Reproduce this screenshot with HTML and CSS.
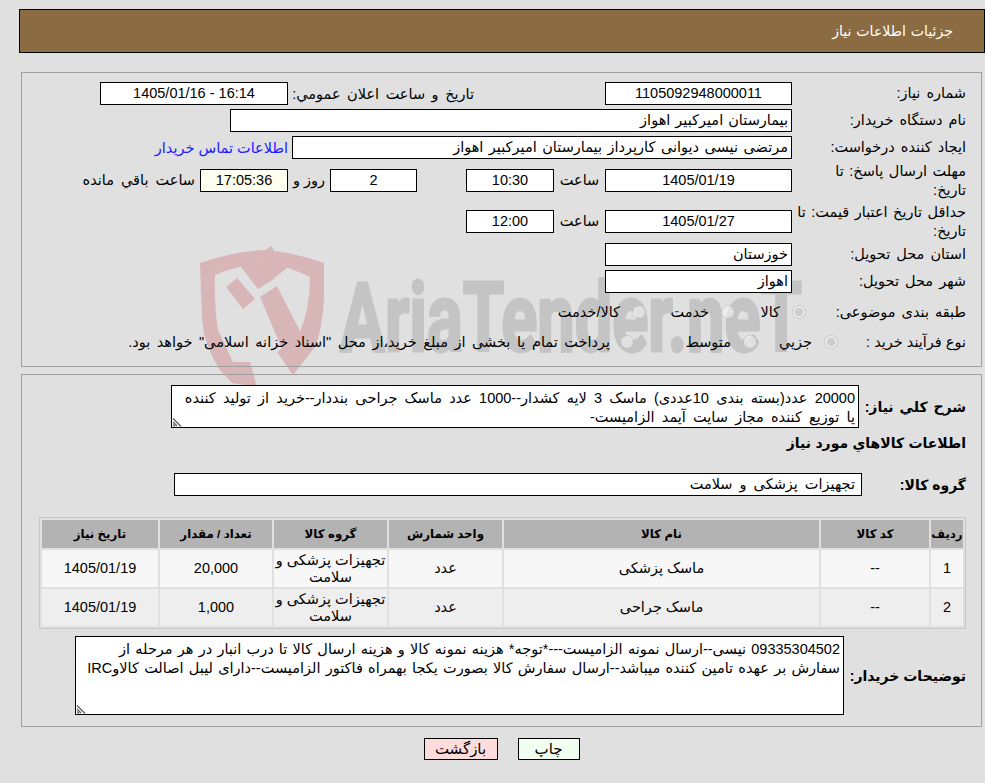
FILE: index.html
```html
<!DOCTYPE html>
<html lang="fa" dir="rtl">
<head>
<meta charset="utf-8">
<title>جزئیات اطلاعات نیاز</title>
<link rel="stylesheet" href="styles.css">
</head>
<body>
<svg class="watermark" width="985" height="783" viewBox="0 0 985 783" aria-hidden="true">
  <path class="wm-red" d="M200 263 Q232 252 262 250 Q294 252 324 263 L324 300 Q322 330 315 347 L293 375 L277 352 L299 334 Q310 310 310 277 Q286 265 262 263 Q238 265 215 275 Q214 305 218 330 L233 362 L250 362 L257 387 L232 383 L220 370 Q204 345 202 320 Z"/>
  <path class="wm-red" d="M226 287 L237 278 L255 299 L243 309 Z M241 267 L256 256 L274 279 L258 289 Z M257 256 L271 246 L287 268 L273 279 Z"/>
  <path class="wm-red" d="M260 297 L277 286 L306 343 L293 375 Z"/>
  <text class="wm-text" x="340" y="351" textLength="462" lengthAdjust="spacingAndGlyphs" dir="ltr">AriaTender.neT</text>
</svg>

<header class="title-bar"><h1>جزئیات اطلاعات نیاز</h1></header>

<section class="panel info">
  <div class="row r-std">
    <span class="lbl">شماره نیاز:</span>
    <span class="box w-187 center">1105092948000011</span>
    <span class="lbl-pub">تاریخ و ساعت اعلان عمومي:</span>
    <span class="box w-188 center">16:14 - 1405/01/16</span>
  </div>
  <div class="row r-std">
    <span class="lbl">نام دستگاه خریدار:</span>
    <span class="box w-562">بیمارستان امیرکبیر اهواز</span>
  </div>
  <div class="row r-std">
    <span class="lbl">ایجاد کننده درخواست:</span>
    <span class="box w-500">مرتضی نیسی دیوانی کارپرداز بیمارستان امیرکبیر اهواز</span>
    <a class="contact" href="#">اطلاعات تماس خریدار</a>
  </div>
  <div class="row r-tall r4">
    <span class="lbl lbl-2">مهلت ارسال پاسخ: تا<br>تاریخ:</span>
    <span class="box w-187 center">1405/01/19</span>
    <span class="hour">ساعت</span>
    <span class="box w-88 center">10:30</span>
    <span class="box w-87 center days">2</span>
    <span class="day-lbl">روز و</span>
    <span class="box w-88 center timer">17:05:36</span>
    <span class="remain">ساعت باقي مانده</span>
  </div>
  <div class="row r-tall r5">
    <span class="lbl lbl-2">حداقل تاریخ اعتبار قیمت: تا<br>تاریخ:</span>
    <span class="box w-187 center">1405/01/27</span>
    <span class="hour">ساعت</span>
    <span class="box w-88 center">12:00</span>
  </div>
  <div class="row r-std r6">
    <span class="lbl">استان محل تحویل:</span>
    <span class="box w-187">خوزستان</span>
  </div>
  <div class="row r-std">
    <span class="lbl">شهر محل تحویل:</span>
    <span class="box w-187">اهواز</span>
  </div>
  <div class="row r-radio r8">
    <span class="lbl">طبقه بندی موضوعی:</span>
    <label class="opt o-kala"><input type="radio" name="cat" disabled checked><span>کالا</span></label>
    <label class="opt o-khed"><input type="radio" name="cat" disabled><span>خدمت</span></label>
    <label class="opt o-both"><input type="radio" name="cat" disabled><span>کالا/خدمت</span></label>
  </div>
  <div class="row r-radio">
    <span class="lbl lbl-tight">نوع فرآیند خرید :</span>
    <label class="opt o-jozi"><input type="radio" name="proc" disabled checked><span>جزیي</span></label>
    <label class="opt o-mot"><input type="radio" name="proc" disabled><span>متوسط</span></label>
    <label class="opt o-pay"><input type="radio" name="proc" disabled><span>پرداخت تمام یا بخشی از مبلغ خرید،از محل "اسناد خزانه اسلامی" خواهد بود.</span></label>
  </div>
</section>

<section class="panel needs">
  <div class="row desc-row">
    <span class="lbl-b desc-lbl">شرح کلي نیاز:</span>
    <textarea class="area desc" readonly>20000 عدد(بسته بندی 10عددی) ماسک 3 لایه کشدار--1000 عدد ماسک جراحی بنددار--خرید از تولید کننده یا توزیع کننده مجاز سایت آیمد الزامیست-</textarea>
  </div>
  <h2 class="sub">اطلاعات کالاهاي مورد نیاز</h2>
  <div class="row group-row">
    <span class="lbl-b group-lbl">گروه کالا:</span>
    <span class="box group-box">تجهیزات پزشکی و سلامت</span>
  </div>
  <table class="goods">
    <colgroup>
      <col class="c1"><col class="c2"><col class="c3"><col class="c4"><col class="c5"><col class="c6"><col class="c7">
    </colgroup>
    <thead>
      <tr><th>ردیف</th><th>کد کالا</th><th>نام کالا</th><th>واحد شمارش</th><th>گروه کالا</th><th>تعداد / مقدار</th><th>تاریخ نیاز</th></tr>
    </thead>
    <tbody>
      <tr><td>1</td><td>--</td><td>ماسک پزشکی</td><td>عدد</td><td>تجهیزات پزشکی و سلامت</td><td>20,000</td><td>1405/01/19</td></tr>
      <tr><td>2</td><td>--</td><td>ماسک جراحی</td><td>عدد</td><td>تجهیزات پزشکی و سلامت</td><td>1,000</td><td>1405/01/19</td></tr>
    </tbody>
  </table>
  <div class="row note-row">
    <span class="lbl-b note-lbl">توضیحات خریدار:</span>
    <textarea class="area note" readonly>09335304502 نیسی--ارسال نمونه الزامیست---*توجه* هزینه نمونه کالا و هزینه ارسال کالا تا درب انبار در هر مرحله از سفارش بر عهده تامین کننده میباشد--ارسال سفارش کالا بصورت یکجا بهمراه فاکتور الزامیست--دارای لیبل اصالت کالاوIRC</textarea>
  </div>
</section>

<div class="actions">
  <button class="btn print" type="button">چاپ</button>
  <button class="btn back" type="button">بازگشت</button>
</div>
</body>
</html>
```

FILE: styles.css
```css
html { background: #e0e0e0; }
body {
  margin: 0;
  position: relative;
  direction: rtl;
  background: transparent;
  color: #000;
  font-family: "Liberation Sans", "DejaVu Sans", sans-serif;
  font-size: 14.5px;
  overflow: hidden;
  height: 783px;
}
.watermark { position: absolute; left: 0; top: 0; z-index: -1; direction: ltr; }
.wm-red { fill: #d8b6b8; }
.wm-text {
  fill: #c4c4c4;
  stroke: #c4c4c4;
  stroke-width: 3px;
  stroke-linejoin: round;
  font-family: Roboto, sans-serif;
  font-weight: 700;
  font-size: 96px;
  direction: ltr;
}
.title-bar {
  margin: 9px 0 0 19px;
  height: 42px;
  background: #8b6b41;
  border: 1px solid #000;
  display: flex;
  align-items: center;
  padding-right: 31px;
}
.title-bar h1 { margin: 0; font-size: 14.1px; font-weight: 400; color: #fff; word-spacing: 1px; }
.panel {
  border: 1px solid #a0a0a0;
  box-sizing: border-box;
}
.info { margin: 19px 3px 0 21px; height: 295px; padding: 9px 14px 0 0; }
.needs { margin: 7px 3px 0 21px; height: 353px; padding: 10px 0 0 0; }
.row { display: flex; align-items: center; }
.r-std { height: 23px; margin-bottom: 4px; }
.r-tall { height: 34px; }
.r4 { margin-top: 1px; }
.r5 { margin-top: 7px; }
.r6 { margin-top: 5px; }
.r-radio { height: 30px; }
.lbl { width: 175px; flex: none; box-sizing: border-box; padding: 0 1px 0 6px; line-height: 19px; word-spacing: 2px; white-space: nowrap; }
.lbl-2 { padding-top: 2px; word-spacing: 1.5px; }
.lbl-tight { word-spacing: 0; }
.box {
  box-sizing: border-box;
  height: 23px;
  line-height: 21px;
  background: #fff;
  border: 1px solid #000;
  padding: 0 3px;
  flex: none;
  white-space: nowrap;
  overflow: hidden;
}
.center { text-align: center; }
.w-187 { width: 187px; }
.w-188 { width: 188px; }
.w-562 { width: 562px; word-spacing: 1px; }
.w-500 { width: 500px; word-spacing: 1.5px; }
.w-88 { width: 88px; }
.w-87 { width: 87px; }
.lbl-pub { width: 181px; margin: 0 131px 0 5px; flex: none; white-space: nowrap; word-spacing: 2.5px; }
.contact { margin-right: 4px; color: #1a1aff; text-decoration: none; white-space: nowrap; }
.hour { width: 51px; flex: none; text-align: center; }
.days { margin-right: 49px; }
.day-lbl { width: 42px; flex: none; text-align: center; }
.timer { background: #fffff0; }
.remain { margin-right: 5px; white-space: nowrap; word-spacing: 3px; }
.opt { display: flex; align-items: center; white-space: nowrap; flex: none; }
.opt input { margin: 0; width: 14px; height: 14px; flex: none; opacity: .85; }
.opt span { margin-right: 12px; }
.o-kala { margin-right: -14px; width: 71px; }
.o-khed { width: 89px; }
.o-jozi { margin-right: -46px; width: 81px; }
.o-mot { width: 123px; }
.o-pay span { margin-right: 10px; word-spacing: 2.5px; }
.lbl-b { font-weight: 700; font-size: 14px; flex: none; }
.area {
  display: block;
  box-sizing: border-box;
  border: 1px solid #000;
  background: #fff url("data:image/svg+xml,%3Csvg xmlns='http://www.w3.org/2000/svg' width='10' height='10'%3E%3Cpath d='M1 1.5L9 9.5M1 5L5 9M1 7.5L3 9.5' stroke='%23606060' stroke-width='1.3' fill='none'/%3E%3C/svg%3E") no-repeat left bottom;
  font: inherit;
  color: #000;
  line-height: 19px;
  padding: 3px 3px 0;
  margin: 0;
  direction: rtl;
  resize: none;
  outline: none;
  overflow: hidden;
}
.desc-row { height: 43px; }
.desc-lbl { width: 122px; box-sizing: border-box; padding-right: 15px; word-spacing: 2px; }
.desc { width: 688px; height: 43px; word-spacing: 3.2px; }
.sub { margin: 0; padding-right: 15px; font-size: 14px; font-weight: 700; height: 45px; line-height: 31px; word-spacing: 0.5px; }
.group-row { height: 23px; }
.group-lbl { width: 119px; box-sizing: border-box; padding-right: 15px; }
.group-box { width: 688px; padding: 0 6px; word-spacing: 3px; }
.goods {
  margin: 21px 15px 0 0;
  width: 927px;
  table-layout: fixed;
  border: 1px solid #c6c6c6;
  border-collapse: separate;
  border-spacing: 2px;
  font-size: 14.5px;
}
.c1 { width: 32px; }
.c2 { width: 108px; }
.c3 { width: 315px; }
.c4 { width: 113px; }
.c5 { width: 113px; }
.c6 { width: 112px; }
.c7 { width: 116px; }
.goods th { height: 28px; padding: 0; background: #b3b3b3; font-size: 11.8px; font-weight: 700; text-align: center; }
.goods td { height: 37px; padding: 0; text-align: center; line-height: 17px; }
.goods tbody tr:nth-child(1) td { background: #f7f7f7; }
.goods tbody tr:nth-child(2) td { background: #eeeeee; }
.note-row { margin-top: 7px; height: 79px; }
.note-lbl { width: 137px; box-sizing: border-box; padding-right: 15px; }
.note { width: 769px; height: 79px; word-spacing: 1.2px; }
.actions { display: flex; justify-content: center; gap: 20px; margin-top: 11px; padding-left: 18px; }
.btn {
  box-sizing: border-box;
  height: 22px;
  border: 1px solid #000;
  font: inherit;
  font-size: 15px;
  color: #000;
  padding: 0;
}
.print { width: 62px; background: #f0fff0; }
.back { width: 74px; background: #ffdcdc; }
```
